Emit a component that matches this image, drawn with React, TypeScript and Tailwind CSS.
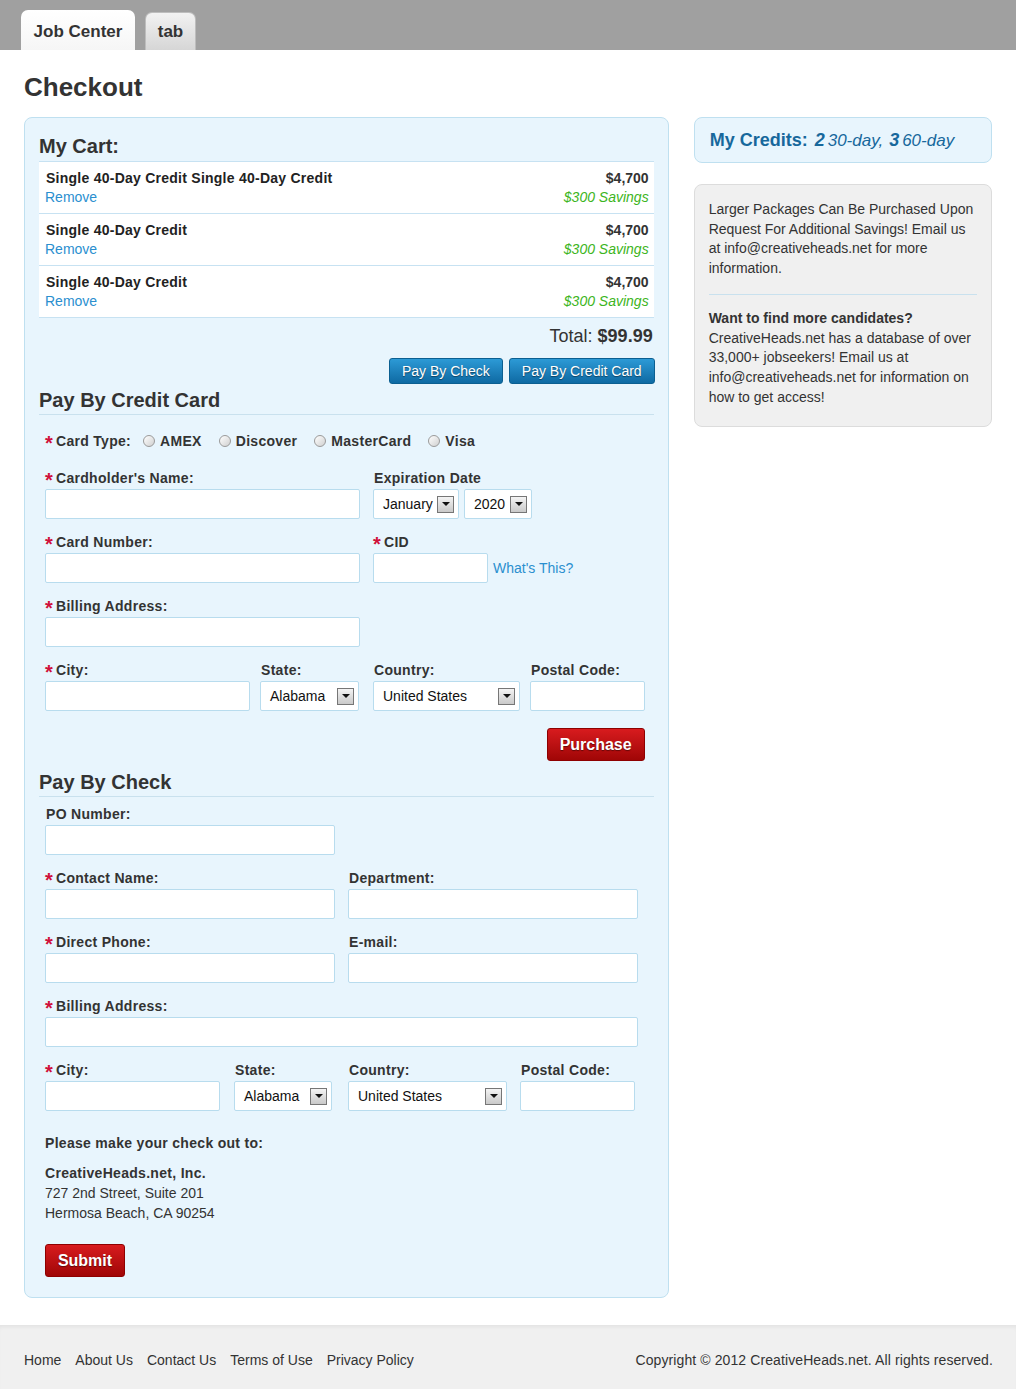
const cartItems = [
  'Single 40-Day Credit Single 40-Day Credit',
  'Single 40-Day Credit',
  'Single 40-Day Credit',
];

function Label({ text, req, className = '' }: { text: string; req?: boolean; className?: string }) {
  return (
    <div className={`flex items-end h-[18px] text-[14px] font-bold text-[#333] leading-[18px] tracking-[0.3px] ${className}`}>
      {req ? (
        <span className="text-[#d0103a] text-[20px] leading-[18px] w-[11px] relative top-[2px]">*</span>
      ) : (
        <span className="w-px" />
      )}
      <span>{text}</span>
    </div>
  );
}

function Input({ w }: { w: string }) {
  return <div className={`h-[30px] bg-white border border-[#b8dcee] rounded-[2px] ${w}`} />;
}

function Select({ w, value, textPl = 'pl-[9px]' }: { w: string; value: string; textPl?: string }) {
  return (
    <div className={`h-[30px] bg-white border border-[#b8dcee] rounded-[2px] flex items-center justify-between pr-[4px] ${textPl} ${w}`}>
      <span className="text-[14px] text-[#111]">{value}</span>
      <span className="w-[17px] h-[17px] border border-[#767676] bg-gradient-to-b from-[#f4f4f4] to-[#c9c9c9] flex items-center justify-center">
        <span className="w-0 h-0 border-l-[4px] border-r-[4px] border-t-[4px] border-l-transparent border-r-transparent border-t-[#111]" />
      </span>
    </div>
  );
}

function Radio({ label }: { label: string }) {
  return (
    <span className="flex items-center gap-[5px]">
      <span className="w-[12px] h-[12px] rounded-full border border-[#9a9a9a] bg-gradient-to-br from-[#ffffff] to-[#d0d0d0]" />
      <span className="text-[14px] font-bold text-[#333] tracking-[0.3px]">{label}</span>
    </span>
  );
}

function BlueButton({ children }: { children: React.ReactNode }) {
  return (
    <button className="h-[26px] px-[12px] rounded-[3px] border border-[#0b5f91] bg-gradient-to-b from-[#2c9ad6] to-[#0e6aa3] text-white text-[14px] [text-shadow:0_1px_1px_rgba(0,0,0,0.45)]">
      {children}
    </button>
  );
}

function RedButton({ children, w }: { children: React.ReactNode; w: string }) {
  return (
    <button className={`h-[33px] rounded-[3px] border border-[#8e0000] bg-gradient-to-b from-[#d81b1e] to-[#a00606] text-white text-[16px] font-bold [text-shadow:0_1px_1px_rgba(0,0,0,0.45)] ${w}`}>
      {children}
    </button>
  );
}

function SectionTitle({ children }: { children: React.ReactNode }) {
  return (
    <div className="border-b border-[#c9e1ee] pb-[2px]">
      <h2 className="text-[20px] leading-[24px] font-bold text-[#333]">{children}</h2>
    </div>
  );
}

export default function App() {
  return (
    <div className="min-h-[1389px] bg-white text-[#333] font-['Liberation_Sans',Arial,sans-serif] flex flex-col">
      <div className="h-[50px] bg-[#a0a0a0] flex items-end pl-[21px] gap-[10px]">
        <div className="w-[114px] h-[40px] rounded-t-[7px] bg-gradient-to-b from-white to-[#f6f6f6] flex items-center justify-center pt-[3px] text-[17px] font-bold text-[#333]">
          Job Center
        </div>
        <div className="w-[51px] h-[38px] rounded-t-[7px] bg-gradient-to-b from-[#f2f2f2] to-[#d6d6d6] border border-b-0 border-[#bdbdbd] flex items-center justify-center pt-[1px] text-[17px] font-bold text-[#333]">
          tab
        </div>
      </div>

      <div className="px-[24px] pt-[22px]">
        <h1 className="text-[26px] leading-[30px] font-bold text-[#333]">Checkout</h1>

        <div className="mt-[15px] flex gap-[25px] items-start">
          <div className="w-[646px] bg-[#e8f5fd] border border-[#bfe0f0] rounded-[8px] px-[14px] pt-[16px] pb-[20px]">
            <h2 className="text-[20px] leading-[24px] font-bold text-[#333]">My Cart:</h2>
            <div className="mt-[3px] bg-white border-t border-[#c7e2f2]">
              {cartItems.map((item, i) => (
                <div key={i} className="border-b border-[#c7e2f2] pl-[6px] pr-[5px] pt-[7px] pb-[6px] flex justify-between">
                  <div>
                    <div className="text-[14px] leading-[18px] font-bold text-[#222] pl-px tracking-[0.25px]">{item}</div>
                    <div className="text-[14px] leading-[20px] text-[#2b8fcf]">Remove</div>
                  </div>
                  <div className="text-right">
                    <div className="text-[14px] leading-[18px] font-bold text-[#333]">$4,700</div>
                    <div className="text-[14px] leading-[20px] italic text-[#3cb521]">$300 Savings</div>
                  </div>
                </div>
              ))}
            </div>
            <div className="mt-[7px] text-right text-[18px] leading-[22px] text-[#333] pr-px">
              Total: <span className="font-bold">$99.99</span>
            </div>
            <div className="mt-[11px] flex justify-end gap-[6px] -mr-px">
              <BlueButton>Pay By Check</BlueButton>
              <BlueButton>Pay By Credit Card</BlueButton>
            </div>

            <div className="mt-[4px]">
              <SectionTitle>Pay By Credit Card</SectionTitle>
            </div>

            <div className="px-[6px]">
              <div className="mt-[16px] h-[20px] flex items-center">
                <Label text="Card Type:" req />
                <div className="flex items-center gap-[17px] ml-[12px]">
                  <Radio label="AMEX" />
                  <Radio label="Discover" />
                  <Radio label="MasterCard" />
                  <Radio label="Visa" />
                </div>
              </div>

              <div className="mt-[18px] flex gap-[13px]">
                <div className="w-[315px]">
                  <Label text="Cardholder's Name:" req />
                  <div className="mt-[2px]"><Input w="w-[315px]" /></div>
                </div>
                <div>
                  <Label text="Expiration Date" />
                  <div className="mt-[2px] flex gap-[5px]">
                    <Select w="w-[86px]" value="January" />
                    <Select w="w-[68px]" value="2020" />
                  </div>
                </div>
              </div>

              <div className="mt-[14px] flex gap-[13px]">
                <div className="w-[315px]">
                  <Label text="Card Number:" req />
                  <div className="mt-[2px]"><Input w="w-[315px]" /></div>
                </div>
                <div>
                  <Label text="CID" req />
                  <div className="mt-[2px] flex items-center gap-[5px]">
                    <Input w="w-[115px]" />
                    <a className="text-[14px] text-[#2b8fcf]">What's This?</a>
                  </div>
                </div>
              </div>

              <div className="mt-[14px]">
                <Label text="Billing Address:" req />
                <div className="mt-[2px]"><Input w="w-[315px]" /></div>
              </div>

              <div className="mt-[14px] flex">
                <div className="w-[205px]">
                  <Label text="City:" req />
                  <div className="mt-[2px]"><Input w="w-[205px]" /></div>
                </div>
                <div className="ml-[10px] w-[99px]">
                  <Label text="State:" />
                  <div className="mt-[2px]"><Select w="w-[99px]" value="Alabama" /></div>
                </div>
                <div className="ml-[14px] w-[147px]">
                  <Label text="Country:" />
                  <div className="mt-[2px]"><Select w="w-[147px]" value="United States" /></div>
                </div>
                <div className="ml-[10px] w-[115px]">
                  <Label text="Postal Code:" />
                  <div className="mt-[2px]"><Input w="w-[115px]" /></div>
                </div>
              </div>

              <div className="mt-[17px] flex justify-end pr-[3px]">
                <RedButton w="w-[98px]">Purchase</RedButton>
              </div>
            </div>

            <div className="mt-[9px]">
              <SectionTitle>Pay By Check</SectionTitle>
            </div>

            <div className="px-[6px]">
              <div className="mt-[8px]">
                <Label text="PO Number:" />
                <div className="mt-[2px]"><Input w="w-[290px]" /></div>
              </div>

              <div className="mt-[14px] flex gap-[13px]">
                <div>
                  <Label text="Contact Name:" req />
                  <div className="mt-[2px]"><Input w="w-[290px]" /></div>
                </div>
                <div>
                  <Label text="Department:" />
                  <div className="mt-[2px]"><Input w="w-[290px]" /></div>
                </div>
              </div>

              <div className="mt-[14px] flex gap-[13px]">
                <div>
                  <Label text="Direct Phone:" req />
                  <div className="mt-[2px]"><Input w="w-[290px]" /></div>
                </div>
                <div>
                  <Label text="E-mail:" />
                  <div className="mt-[2px]"><Input w="w-[290px]" /></div>
                </div>
              </div>

              <div className="mt-[14px]">
                <Label text="Billing Address:" req />
                <div className="mt-[2px]"><Input w="w-[593px]" /></div>
              </div>

              <div className="mt-[14px] flex">
                <div className="w-[175px]">
                  <Label text="City:" req />
                  <div className="mt-[2px]"><Input w="w-[175px]" /></div>
                </div>
                <div className="ml-[14px] w-[98px]">
                  <Label text="State:" />
                  <div className="mt-[2px]"><Select w="w-[98px]" value="Alabama" /></div>
                </div>
                <div className="ml-[16px] w-[159px]">
                  <Label text="Country:" />
                  <div className="mt-[2px]"><Select w="w-[159px]" value="United States" /></div>
                </div>
                <div className="ml-[13px] w-[115px]">
                  <Label text="Postal Code:" />
                  <div className="mt-[2px]"><Input w="w-[115px]" /></div>
                </div>
              </div>

              <div className="mt-[23px] text-[14px] leading-[18px] font-bold text-[#333] tracking-[0.3px]">
                Please make your check out to:
              </div>
              <div className="mt-[11px] text-[14px] leading-[20px] text-[#333]">
                <div className="font-bold tracking-[0.3px]">CreativeHeads.net, Inc.</div>
                <div>727 2nd Street, Suite 201</div>
                <div>Hermosa Beach, CA 90254</div>
              </div>

              <div className="mt-[21px]">
                <RedButton w="w-[80px]">Submit</RedButton>
              </div>
            </div>
          </div>

          <div className="w-[299px]">
            <div className="h-[46px] bg-[#e8f5fd] border border-[#bfe0f0] rounded-[8px] flex items-center pt-px px-[15px] text-[18px] text-[#17689c]">
              <span className="font-bold">My Credits:</span>
              <span className="ml-[7px] font-bold italic">2</span>
              <span className="ml-[3px] italic text-[17px]">30-day,</span>
              <span className="ml-[6px] font-bold italic">3</span>
              <span className="ml-[3px] italic text-[17px]">60-day</span>
            </div>
            <div className="mt-[21px] bg-[#f0f0f0] border border-[#dcdcdc] rounded-[8px] px-[14px] pt-[15px] pb-[19px] text-[14px] leading-[19.7px] text-[#333]">
              <p className="pb-[15px] border-b border-[#c9e1ee]">
                Larger Packages Can Be Purchased Upon<br />
                Request For Additional Savings! Email us<br />
                at info@creativeheads.net for more<br />
                information.
              </p>
              <p className="mt-[14px]">
                <span className="font-bold">Want to find more candidates?</span><br />
                CreativeHeads.net has a database of over<br />
                33,000+ jobseekers! Email us at<br />
                info@creativeheads.net for information on<br />
                how to get access!
              </p>
            </div>
          </div>
        </div>
      </div>

      <div className="mt-[27px] bg-[#f0f0f0] shadow-[inset_0_4px_4px_-2px_rgba(0,0,0,0.06)] flex-1 pt-[25px] pb-[19px] pl-[24px] pr-[23px] flex justify-between text-[14px] leading-[20px] text-[#333]">
        <div className="flex gap-[14px]">
          <a>Home</a>
          <a>About Us</a>
          <a>Contact Us</a>
          <a>Terms of Use</a>
          <a>Privacy Policy</a>
        </div>
        <div className="tracking-[0.1px]">Copyright © 2012 CreativeHeads.net. All rights reserved.</div>
      </div>
    </div>
  );
}
